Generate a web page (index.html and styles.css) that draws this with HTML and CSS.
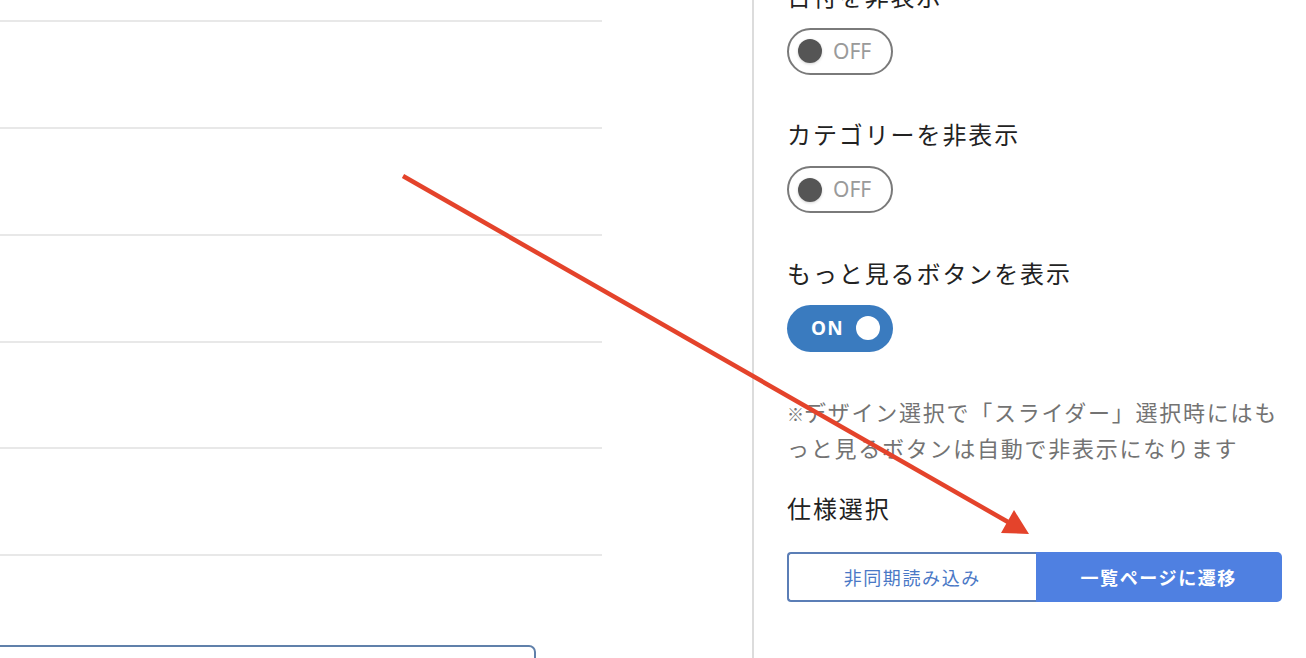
FILE: index.html
```html
<!DOCTYPE html>
<html lang="ja">
<head>
<meta charset="utf-8">
<title>設定</title>
<link rel="stylesheet" href="styles.css">
</head>
<body>
<div class="page">
  <div class="main">
    <div class="rows">
      <div class="row"></div>
      <div class="row"></div>
      <div class="row"></div>
      <div class="row"></div>
      <div class="row"></div>
      <div class="row"></div>
    </div>
    <div class="box"></div>
  </div>
  <aside class="panel">
    <div class="setting first">
      <div class="label">日付を非表示</div>
      <div class="toggle off"><span class="knob"></span><span class="state">OFF</span></div>
    </div>
    <div class="setting">
      <div class="label">カテゴリーを非表示</div>
      <div class="toggle off"><span class="knob"></span><span class="state">OFF</span></div>
    </div>
    <div class="setting">
      <div class="label">もっと見るボタンを表示</div>
      <div class="toggle on"><span class="state">ON</span><span class="knob"></span></div>
    </div>
    <p class="note"><span class="kome">※</span>デザイン選択で「スライダー」選択時にはもっと見るボタンは自動で非表示になります</p>
    <div class="label heading">仕様選択</div>
    <div class="segment">
      <div class="seg-btn">非同期読み込み</div>
      <div class="seg-btn active">一覧ページに遷移</div>
    </div>
  </aside>
  <svg class="arrow" width="1306" height="658" viewBox="0 0 1306 658">
    <line x1="403" y1="176" x2="1008" y2="522" stroke="#e4432b" stroke-width="4.5"/>
    <polygon points="1029,534 1001,533 1014,510" fill="#e4432b"/>
  </svg>
</div>
</body>
</html>
```
FILE: styles.css
```css
* { box-sizing: border-box; }
html, body { margin: 0; padding: 0; background: #fff; }
body {
  font-family: "Noto Sans CJK JP", "Noto Sans", sans-serif;
  overflow: hidden;
  height: 658px;
}
.page {
  position: relative;
  display: flex;
  width: 1306px;
  height: 658px;
  overflow: hidden;
}
.main {
  width: 754px;
  flex: none;
  border-right: 2px solid #dcdcdc;
  padding-right: 150px;
}
.rows {
  margin-top: -85px;
}
.row {
  height: 106.9px;
  border-bottom: 2px solid #e8e8e8;
}
.box {
  margin-top: 89px;
  margin-left: -10px;
  width: 546px;
  height: 120px;
  border: 2px solid #6080aa;
  border-radius: 7px;
}
.panel {
  flex: none;
  width: 552px;
  padding-left: 33px;
}
.setting {
  margin-bottom: 41.5px;
}
.setting.first {
  margin-top: -22.5px;
}
.label {
  font-size: 24px;
  line-height: 36px;
  letter-spacing: 1.9px;
  color: #222;
  white-space: nowrap;
}
.toggle {
  margin-top: 14px;
  width: 106px;
  height: 47px;
  border-radius: 24px;
  display: flex;
  align-items: center;
}
.toggle.off {
  border: 2px solid #7a7a7a;
  padding-left: 9px;
}
.toggle.on {
  background: #3a7bbf;
  padding-left: 24px;
}
.knob {
  width: 24px;
  height: 24px;
  border-radius: 50%;
  flex: none;
}
.off .knob {
  background: #555;
  box-shadow: 0 1px 3px rgba(0,0,0,0.18);
}
.on .knob {
  background: #fff;
  margin-left: 12px;
}
.state {
  font-family: "Noto Sans", "Lato", sans-serif;
}
.off .state {
  margin-left: 11px;
  font-size: 21px;
  color: #9a9a9a;
  line-height: 1;
}
.on .state {
  color: #fff;
  font-weight: 700;
  font-size: 19px;
  letter-spacing: 1.3px;
  line-height: 1;
}
.note {
  margin: 0;
  width: 495px;
  font-size: 22px;
  line-height: 36px;
  letter-spacing: 1.75px;
  color: #737373;
}
.kome {
  font-size: 17px;
  line-height: 1;
  letter-spacing: 0;
  font-weight: 700;
}
.heading {
  margin-top: 25px;
}
.segment {
  margin-top: 26px;
  width: 495px;
  height: 50px;
  display: flex;
}
.seg-btn {
  flex: 1;
  display: flex;
  align-items: center;
  justify-content: center;
  font-size: 18px;
  letter-spacing: 1.6px;
  color: #4a78c6;
  border: 2px solid #5b7eb6;
  border-right: none;
  border-radius: 4px 0 0 4px;
}
.seg-btn.active {
  background: #4f80e1;
  color: #fff;
  font-weight: 700;
  border: none;
  border-radius: 0 5px 5px 0;
}
.arrow {
  position: absolute;
  left: 0;
  top: 0;
  pointer-events: none;
}
```
